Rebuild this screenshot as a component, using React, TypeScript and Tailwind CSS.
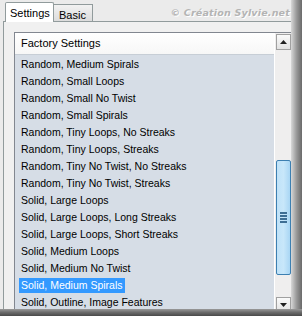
import React from 'react';

const items = [
  'Random, Medium Spirals',
  'Random, Small Loops',
  'Random, Small No Twist',
  'Random, Small Spirals',
  'Random, Tiny Loops, No Streaks',
  'Random, Tiny Loops, Streaks',
  'Random, Tiny No Twist, No Streaks',
  'Random, Tiny No Twist, Streaks',
  'Solid, Large Loops',
  'Solid, Large Loops, Long Streaks',
  'Solid, Large Loops, Short Streaks',
  'Solid, Medium Loops',
  'Solid, Medium No Twist',
  'Solid, Medium Spirals',
  'Solid, Outline, Image Features',
];

const selected = 'Solid, Medium Spirals';

const App: React.FC = () => {
  return (
    <div
      className="relative w-[302px] h-[316px] overflow-hidden bg-[#ebebeb] text-[10.5px] text-black"
      style={{ fontFamily: '"Liberation Sans", Arial, sans-serif' }}
    >
      {/* Tabs row */}
      <div className="relative flex items-end h-[21px] pl-[5px]">
        <div className="relative z-10 h-[20px] w-[49px] -mb-px bg-white border border-b-0 border-[#919b9c] rounded-t-[2px] pl-[4px] pt-[2px] text-[11px]">
          Settings
        </div>
        <div className="h-[17px] w-[39px] bg-gradient-to-b from-[#f2f2f2] to-[#dcdcdc] border border-l-0 border-b-0 border-[#919b9c] pl-[5px] pt-[2px] text-[11px]">
          Basic
        </div>
        <div
          className="absolute right-[12px] top-[6px] text-[9.5px] font-bold italic text-[#b4b4b4] tracking-[0.2px]"
          style={{ fontFamily: '"DejaVu Sans", Verdana, sans-serif', textShadow: '1px 1px 0 #ffffff' }}
        >
          © Création Sylvie.net
        </div>
      </div>

      {/* Tab panel */}
      <div className="ml-[3px] mr-[9px] h-[300px] border border-[#919b9c] bg-[#f0f0f0] pt-[10px] pl-[10px]">
        {/* List box */}
        <div className="flex h-[300px] border border-[#828790] bg-[#f0f0f0]">
          <div className="flex-1 flex flex-col border-r border-white bg-[#d6dde6]">
            <div className="h-[22px] flex items-center pl-[6px] bg-gradient-to-b from-white to-[#f7f7f7] border-b border-[#c7ced6] text-[11px]">
              Factory Settings
            </div>
            <div className="pt-[1px]">
              {items.map((item) => (
                <div key={item} className="h-[17px] flex items-center pl-[4px]">
                  <span
                    className={
                      item === selected
                        ? 'px-[2px] h-[15px] leading-[15px] bg-[#3399ff] text-white'
                        : 'px-[2px] h-[15px] leading-[15px]'
                    }
                  >
                    {item}
                  </span>
                </div>
              ))}
            </div>
          </div>

          {/* Scrollbar */}
          <div className="w-[16px] flex flex-col items-center bg-[#efeeee] pt-[1px]">
            <div className="w-[15px] h-[16px] border border-[#a0a0a0] bg-gradient-to-b from-[#fafafa] to-[#e2e2e2] flex items-center justify-center">
              <svg width="7" height="4" viewBox="0 0 7 4">
                <path d="M3.5 0 L7 4 L0 4 Z" fill="#202020" />
              </svg>
            </div>
            <div className="mt-[110px] w-[15px] h-[115px] border border-[#3c7fb1] rounded-[2px] bg-gradient-to-r from-[#bfe2f8] via-[#c8e7fa] to-[#a9d6f4] flex items-center justify-center">
              <div className="flex flex-col gap-[1px]">
                <div className="w-[7px] h-[2px] bg-[#3e6e94]" />
                <div className="w-[7px] h-[2px] bg-[#3e6e94]" />
                <div className="w-[7px] h-[2px] bg-[#3e6e94]" />
                <div className="w-[7px] h-[2px] bg-[#3e6e94]" />
              </div>
            </div>
            <div className="mt-[22px] w-[15px] h-[16px] border border-[#a0a0a0] bg-gradient-to-b from-[#fafafa] to-[#e2e2e2] flex items-center justify-center">
              <svg width="7" height="4" viewBox="0 0 7 4">
                <path d="M0 0 L7 0 L3.5 4 Z" fill="#202020" />
              </svg>
            </div>
          </div>
        </div>
      </div>

      {/* Frame shadow */}
      <div className="absolute top-0 right-0 w-[11px] h-full bg-gradient-to-r from-[#d8d8d8] via-[#9a9a9a] to-[#6a6a6a]" />
      <div className="absolute bottom-0 left-0 w-full h-[7px] bg-gradient-to-b from-[#9a9a9a] via-[#6a6a6a] to-[#4a4a4a]" />
    </div>
  );
};

export default App;
